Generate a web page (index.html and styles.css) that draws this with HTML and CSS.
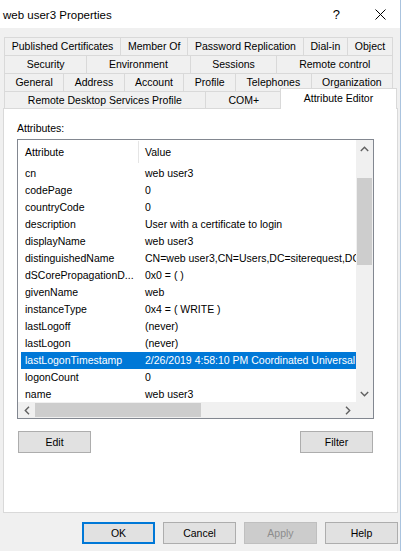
FILE: index.html
```html
<!DOCTYPE html>
<html>
<head>
<meta charset="utf-8">
<title>web user3 Properties</title>
<link rel="stylesheet" href="styles.css">
</head>
<body>
<div class="dialog">
  <div class="titlebar">
    <span class="title">web user3 Properties</span>
    <span class="help">?</span>
    <span class="close"><svg width="11" height="11" viewBox="0 0 11 11"><path d="M0.5 0.5 L10.5 10.5 M10.5 0.5 L0.5 10.5" stroke="#000" stroke-width="1" fill="none"/></svg></span>
  </div>
  <div class="tabs">
    <div class="tabrow">
      <div class="tab">Published Certificates</div>
      <div class="tab">Member Of</div>
      <div class="tab">Password Replication</div>
      <div class="tab">Dial-in</div>
      <div class="tab">Object</div>
    </div>
    <div class="tabrow">
      <div class="tab">Security</div>
      <div class="tab">Environment</div>
      <div class="tab">Sessions</div>
      <div class="tab">Remote control</div>
    </div>
    <div class="tabrow">
      <div class="tab">General</div>
      <div class="tab">Address</div>
      <div class="tab">Account</div>
      <div class="tab">Profile</div>
      <div class="tab">Telephones</div>
      <div class="tab">Organization</div>
    </div>
    <div class="tabrow last">
      <div class="tab">Remote Desktop Services Profile</div>
      <div class="tab">COM+</div>
      <div class="tab sel">Attribute Editor</div>
    </div>
  </div>
  <div class="panel">
    <div class="label">Attributes:</div>
    <div class="list">
      <div class="list-main">
        <div class="header">
          <div class="c1">Attribute</div>
          <div class="c2">Value</div>
        </div>
        <div class="row"><div class="c1">cn</div><div class="c2">web user3</div></div>
        <div class="row"><div class="c1">codePage</div><div class="c2">0</div></div>
        <div class="row"><div class="c1">countryCode</div><div class="c2">0</div></div>
        <div class="row"><div class="c1">description</div><div class="c2">User with a certificate to login</div></div>
        <div class="row"><div class="c1">displayName</div><div class="c2">web user3</div></div>
        <div class="row"><div class="c1">distinguishedName</div><div class="c2">CN=web user3,CN=Users,DC=siterequest,DC=com</div></div>
        <div class="row"><div class="c1">dSCorePropagationD...</div><div class="c2">0x0 = ( )</div></div>
        <div class="row"><div class="c1">givenName</div><div class="c2">web</div></div>
        <div class="row"><div class="c1">instanceType</div><div class="c2">0x4 = ( WRITE )</div></div>
        <div class="row"><div class="c1">lastLogoff</div><div class="c2">(never)</div></div>
        <div class="row"><div class="c1">lastLogon</div><div class="c2">(never)</div></div>
        <div class="row sel"><div class="c1">lastLogonTimestamp</div><div class="c2">2/26/2019 4:58:10 PM Coordinated Universal Time</div></div>
        <div class="row"><div class="c1">logonCount</div><div class="c2">0</div></div>
        <div class="row"><div class="c1">name</div><div class="c2">web user3</div></div>
      </div>
      <div class="vscroll">
        <div class="sbtn"><svg width="9" height="6" viewBox="0 0 9 6"><path d="M0.8 5 L4.5 1.3 L8.2 5" stroke="#606060" stroke-width="1.4" fill="none"/></svg></div>
        <div class="vgap"></div>
        <div class="vthumb"></div>
        <div class="fill"></div>
        <div class="sbtn"><svg width="9" height="6" viewBox="0 0 9 6"><path d="M0.8 1 L4.5 4.7 L8.2 1" stroke="#606060" stroke-width="1.4" fill="none"/></svg></div>
      </div>
      <div class="hscroll">
        <div class="hbtn"><svg width="6" height="9" viewBox="0 0 6 9"><path d="M5 0.8 L1.3 4.5 L5 8.2" stroke="#606060" stroke-width="1.4" fill="none"/></svg></div>
        <div class="hthumb"></div>
        <div class="fill"></div>
        <div class="hbtn"><svg width="6" height="9" viewBox="0 0 6 9"><path d="M1 0.8 L4.7 4.5 L1 8.2" stroke="#606060" stroke-width="1.4" fill="none"/></svg></div>
      </div>
      <div class="corner"></div>
    </div>
    <div class="panel-buttons">
      <div class="btn">Edit</div>
      <div class="btn">Filter</div>
    </div>
  </div>
  <div class="footer">
    <div class="btn default">OK</div>
    <div class="btn">Cancel</div>
    <div class="btn disabled">Apply</div>
    <div class="btn">Help</div>
  </div>
</div>
</body>
</html>
```

FILE: styles.css
```css
* { box-sizing: border-box; }
html, body { margin: 0; padding: 0; }
body {
  background: #fff;
  font-family: "Liberation Sans", Arial, sans-serif;
  font-size: 10.5px;
  color: #000;
  width: 406px;
  height: 551px;
  overflow: hidden;
}
.dialog {
  width: 401px;
  height: 551px;
  background: #f0f0f0;
  border-right: 1px solid #aac3de;
  display: flex;
  flex-direction: column;
}
.titlebar {
  height: 28px;
  flex: none;
  background: #fff;
  display: flex;
  align-items: center;
  padding-left: 3px;
}
.title { font-size: 11.5px; flex: 1; padding-top: 1px; }
.help { font-size: 13px; margin-right: 35px; }
.close { display: flex; margin-right: 14px; }

.tabs { margin: 9px 0 0 4px; width: 389px; flex: none; }
.tabrow { display: flex; height: 18px; }
.tabrow.last { height: 17px; }
.tab {
  flex: 1 1 auto;
  border: 1px solid #d9d9d9;
  border-bottom: none;
  margin-left: -1px;
  text-align: center;
  line-height: 17px;
  white-space: nowrap;
}
.tab:first-child { margin-left: 0; }
.tab.sel {
  background: #fff;
  margin: -3px -4px -1px -3px;
  height: 21px;
  line-height: 18px;
  position: relative;
  z-index: 1;
}

.panel {
  flex: none;
  margin-left: 3px;
  width: 395px;
  height: 405px;
  background: #fff;
  border: 1px solid #d9d9d9;
  padding: 12px 0 0 13px;
}
.label { height: 14px; line-height: 14px; margin-bottom: 4px; }
.list {
  width: 357px;
  height: 280px;
  border: 1px solid #828790;
  display: grid;
  grid-template-columns: 338px 17px;
  grid-template-rows: 262px 16px;
}
.list-main { overflow: hidden; background: #fff; }
.header { display: flex; height: 25px; padding-top: 1px; }
.header .c1 { border-right: 1px solid #e5e5e5; height: 22px; line-height: 23px; }
.header .c2 { line-height: 23px; }
.c1 { width: 121px; flex: none; padding-left: 7px; white-space: nowrap; overflow: hidden; }
.c2 { padding-left: 6px; white-space: nowrap; }
.row { display: flex; height: 17px; line-height: 17px; }
.row.sel { background: #0078d7; color: #fff; margin-left: 3px; }
.row.sel .c1 { width: 118px; padding-left: 4px; }

.vscroll { background: #f0f0f0; display: flex; flex-direction: column; }
.sbtn { height: 17px; flex: none; display: flex; align-items: center; justify-content: center; }
.vgap { height: 21px; flex: none; }
.vthumb { height: 87px; flex: none; background: #cdcdcd; margin: 0 1px; }
.fill { flex: 1; }
.hscroll { background: #f0f0f0; display: flex; }
.hbtn { width: 17px; flex: none; display: flex; align-items: center; justify-content: center; }
.hthumb { width: 166px; flex: none; background: #cdcdcd; margin: 1px 0; }
.corner { background: #f0f0f0; }

.panel-buttons {
  display: flex;
  justify-content: space-between;
  width: 355px;
  margin: 12px 0 0 1px;
}
.btn {
  width: 73px;
  height: 22px;
  background: #e1e1e1;
  border: 1px solid #adadad;
  text-align: center;
  line-height: 20px;
}
.btn.default { border-color: #0078d7; box-shadow: inset 0 0 0 1px #0078d7; }
.btn.disabled { background: #cccccc; border-color: #bfbfbf; color: #8d8d8d; }
.footer {
  flex: none;
  display: flex;
  gap: 8px;
  margin-top: 9px;
  padding-left: 82px;
}
```
